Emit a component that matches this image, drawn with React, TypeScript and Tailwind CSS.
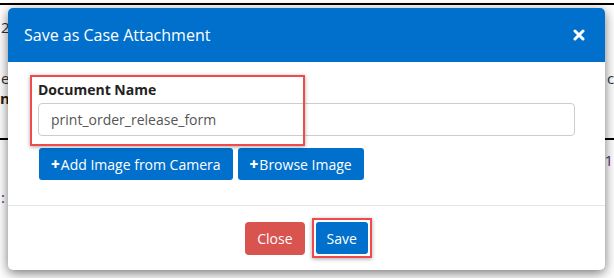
import React from "react";

function CloseIcon() {
  return (
    <svg width="12" height="12" viewBox="0 0 12 12" className="block">
      <path d="M2 2 L10 10 M10 2 L2 10" stroke="white" strokeWidth="3" strokeLinecap="round" />
    </svg>
  );
}

function Plus() {
  return <span className="font-extrabold text-[15px] leading-none mr-[1px]">+</span>;
}

export default function App() {
  return (
    <div
      className="relative w-[614px] h-[278px] overflow-hidden bg-white text-[#333]"
      style={{ fontFamily: '"Open Sans", "Noto Sans", sans-serif' }}
    >
      {/* page behind the dialog */}
      <div className="flex flex-col text-[15px]">
        <div className="mt-[3px] border-t-2 border-black" />
        <div className="flex justify-between h-[20px] mt-[11px] pl-[1px]">
          <span>2</span>
        </div>
        <div className="flex justify-between h-[20px] mt-[31px] pl-[1px]">
          <span>e</span>
          <span className="pl-[606px] absolute">co</span>
        </div>
        <div className="flex h-[20px] mt-[0px]">
          <span className="font-bold text-[#2b2010]">n</span>
        </div>
        <div className="mt-[31px] border-t-2 border-black" />
        <div className="flex justify-end h-[20px] mt-[9px] pr-[1px] text-[#5a2a6a]">
          <span>1</span>
        </div>
        <div className="flex h-[20px] mt-[17px] pl-[1px] text-[#5a2a6a]">
          <span>:</span>
        </div>
      </div>

      {/* dialog */}
      <div className="absolute left-[8px] top-[8px] w-[597px] h-[262px] bg-white rounded-[5px] shadow-[0_3px_12px_rgba(0,0,0,0.55)] flex flex-col">
        <div className="h-[54px] bg-[#0070cc] rounded-t-[5px] flex items-center justify-between pl-[16px] pr-[20px]">
          <span className="text-white text-[16px]">Save as Case Attachment</span>
          <CloseIcon />
        </div>

        <div className="relative px-[30px] pt-[18px] pb-[25px] flex flex-col border-b border-[#e5e5e5]">
          <label className="text-[14px] font-bold text-[#222] leading-[20px]">Document Name</label>
          <div className="mt-[3px] h-[33px] border border-[#cccccc] rounded-[4px] flex items-center px-[12px] text-[14px] text-[#555]">
            print_order_release_form
          </div>
          <div className="mt-[12px] ml-[1px] flex gap-[5px]">
            <button className="h-[32px] px-[12px] bg-[#0070cc] text-white text-[14px] rounded-[3px] flex items-center">
              <Plus />
              Add Image from Camera
            </button>
            <button className="h-[32px] px-[12px] bg-[#0070cc] text-white text-[14px] rounded-[3px] flex items-center">
              <Plus />
              Browse Image
            </button>
          </div>
          <div className="absolute left-[22px] top-[13px] w-[275px] h-[71px] border-2 border-[#f04a4f] shadow-[0_1px_4px_rgba(0,0,0,0.35)]" />
        </div>

        <div className="flex-1 flex items-center justify-center gap-[11px]">
          <button className="h-[33px] px-[12px] bg-[#d9534f] text-white text-[14px] rounded-[4px]">Close</button>
          <div className="p-[2px] border-2 border-[#f04a4f] shadow-[0_1px_4px_rgba(0,0,0,0.35)] -m-[4px]">
            <button className="h-[32px] px-[11px] bg-[#0070cc] text-white text-[14px] rounded-[3px] block">Save</button>
          </div>
        </div>
      </div>
    </div>
  );
}
